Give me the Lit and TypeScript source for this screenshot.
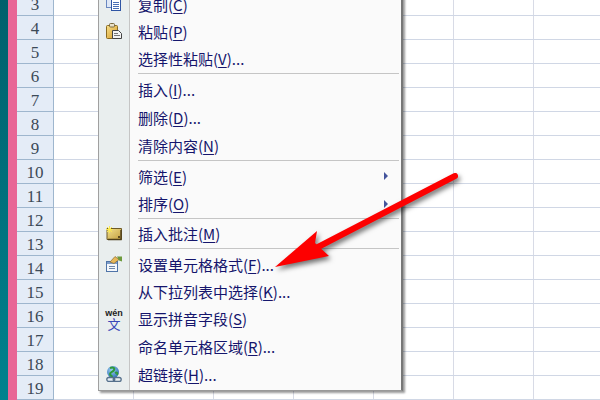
import { LitElement, html, css, svg } from "lit";
import { customElement } from "lit/decorators.js";

type Item = { label: string; key: string; tail?: string; icon?: string; sub?: boolean; h: number; sep?: boolean; up?: boolean };

const rows = [3, 4, 5, 6, 7, 8, 9, 10, 11, 12, 13, 14, 15, 16, 17, 18, 19];
const cols = [0, 1, 2, 3, 4, 5, 6];

const items: Item[] = [
  { label: "复制", key: "C", icon: "copy", h: 27 },
  { label: "粘贴", key: "P", icon: "paste", h: 27 },
  { label: "选择性粘贴", key: "V", tail: "...", h: 28, sep: true },
  { label: "插入", key: "I", tail: "...", h: 28 },
  { label: "删除", key: "D", tail: "...", h: 27 },
  { label: "清除内容", key: "N", h: 29, sep: true },
  { label: "筛选", key: "E", sub: true, h: 27 },
  { label: "排序", key: "O", sub: true, h: 28, sep: true },
  { label: "插入批注", key: "M", icon: "note", h: 27, sep: true, up: true },
  { label: "设置单元格格式", key: "F", tail: "...", icon: "format", h: 27 },
  { label: "从下拉列表中选择", key: "K", tail: "...", h: 27 },
  { label: "显示拼音字段", key: "S", icon: "wen", h: 28 },
  { label: "命名单元格区域", key: "R", tail: "...", h: 28 },
  { label: "超链接", key: "H", tail: "...", icon: "link", h: 28 },
];

const icons: Record<string, unknown> = {
  copy: svg`<rect x="0.5" y="0.5" width="9" height="11" fill="#dfe8f6" stroke="#6a88c0"/><rect x="5.5" y="3.5" width="9" height="11" fill="#fff" stroke="#2f55a4"/><path d="M7 6.500h6M7 8.500h6M7 10.500h6M7 12.500h6" stroke="#4a6fb5"/>`,
  paste: svg`<defs><linearGradient id="pg" x1="0" y1="0" x2="1" y2="1"><stop offset="0" stop-color="#f8e08a"/><stop offset="1" stop-color="#d49a28"/></linearGradient></defs><rect x="0.500" y="2.500" width="11" height="13" rx="1" fill="url(#pg)" stroke="#8a6a20"/><rect x="3.500" y="0.500" width="5" height="3.500" rx="1" fill="#e8e0c8" stroke="#7a6a40"/><path d="M6.500 7.500h6l3 3v5h-9z" fill="#f4f4f4" stroke="#444"/><path d="M8 10.500h4M8 12.500h6" stroke="#777"/>`,
  note: svg`<defs><linearGradient id="ng" x1="0" y1="0" x2="1" y2="1"><stop offset="0" stop-color="#f2e08e"/><stop offset="1" stop-color="#c4a040"/></linearGradient></defs><path d="M1 2.500h14.500v11h-14.500z" fill="url(#ng)" stroke="#6e5a28"/><path d="M15 4v9.500H2" stroke="#4e3f1a" stroke-width="1.400" fill="none"/><rect x="12" y="10" width="2" height="2" fill="#5e4c20"/><path d="M3.500 0v7M0 3.500h7M1 1l5 5M6 1L1 6" stroke="#fbe94e"/>`,
  format: svg`<rect x="0.500" y="5.500" width="11" height="10" fill="#f4f7fb" stroke="#4f74a8"/><path d="M1 7h10" stroke="#7d9cc8" stroke-width="2"/><path d="M3 10.500h6M3 12.500h6" stroke="#6e86a8"/><path d="M4 6l5-5.500 4 3-5 4z" fill="#e8b858" stroke="#8a6a30" stroke-width=".7"/><path d="M11 0.500h5v5l-3-1z" fill="#6d9a3c"/>`,
  link: svg`<defs><radialGradient id="lg" cx=".4" cy=".35" r=".7"><stop offset="0" stop-color="#9ad0f0"/><stop offset="1" stop-color="#2f6fb8"/></radialGradient></defs><circle cx="7" cy="6" r="6" fill="url(#lg)"/><path d="M4 2c3-1 5 0 4 2s-4 2-4 4 2 1 2 3M9 7c2-1 3 0 2 2" stroke="#2f9a3a" stroke-width="2" fill="none"/><rect x="0.800" y="11.500" width="8" height="4" rx="2" fill="#e4edf4" stroke="#55708c" stroke-width="1.300"/><rect x="7.200" y="11.500" width="8" height="4" rx="2" fill="none" stroke="#55708c" stroke-width="1.300"/>`,
};

@customElement("app-root")
export class AppRoot extends LitElement {
  static styles = css`
    :host { display: block; position: relative; width: 600px; height: 400px; overflow: hidden; background: #fff; font-family: "Noto Sans CJK SC", sans-serif; }
    .sheet { display: flex; height: 400px; overflow: hidden; }
    .teal { flex: none; width: 8px; background: linear-gradient(#00606c, #00828e); }
    .pink { flex: none; width: 9px; background: #e86696; }
    .grid { flex: 1; min-width: 0; display: flex; flex-direction: column; }
    .row { flex: none; height: 24px; display: flex; box-sizing: border-box; border-bottom: 1px solid #d0d7e5; }
    .row.first { height: 16px; }
    .head { flex: none; box-sizing: border-box; width: 37px; height: 24px; margin-bottom: -1px; background: #e4ecf7; border-right: 1px solid #9eb6ce; border-bottom: 1px solid #9eb6ce; display: flex; align-items: center; justify-content: center; padding-top: 3px; font: 17px "Liberation Serif", serif; color: #3c4a58; overflow: hidden; line-height: 20px; }
    .row.first .head { height: 16px; align-items: flex-end; padding-top: 0; line-height: 20px; }
    .cell { flex: none; box-sizing: border-box; width: 80px; border-right: 1px solid #d8dbe6; }
    .menu { position: absolute; left: 98px; top: -9px; width: 302px; display: flex; flex-direction: column; background: linear-gradient(90deg, #e9eeee 0 30px, #c5c5c5 30px 31px, #fafafa 31px); border-left: 1px solid #a0a0a0; border-right: 2px solid #777; border-bottom: 1px solid #999; box-shadow: 2px 2px 2px rgba(0,0,0,.4); padding-bottom: 1px; }
    .item { flex: none; box-sizing: border-box; position: relative; display: flex; align-items: center; padding-left: 39px; padding-bottom: 1px; font-size: 15px; color: #15156c; white-space: nowrap; }
    .item.up { padding-bottom: 3px; }
    .item u { text-underline-offset: 2px; }
    .sep { flex: none; height: 3px; margin: 0 2px 0 39px; box-sizing: border-box; border-top: 1px solid #c5c5c5; }
    .icon { position: absolute; left: 7px; top: 50%; margin-top: -9px; width: 16px; height: 16px; display: block; }
    .wen { position: absolute; left: 7px; top: 50%; margin-top: -10px; width: 16px; display: flex; flex-direction: column; align-items: center; line-height: 1; }
    .wen b { font: bold 9px/8px "Liberation Sans", sans-serif; color: #222; height: 8px; }
    .wen i { font: normal 13px/12px "Noto Sans CJK SC", sans-serif; color: #3a46b8; height: 12px; margin-top: 1px; }
    .tri { position: absolute; left: 285px; top: 50%; margin-top: -4.500px; width: 0; height: 0; border-left: 4px solid #44549c; border-top: 4px solid transparent; border-bottom: 4px solid transparent; }
    .arrow { position: absolute; left: 0; top: 0; width: 600px; height: 400px; filter: drop-shadow(2px 3px 2.500px rgba(0,0,0,.55)); pointer-events: none; }
  `;

  private renderIcon(i: Item) {
    if (!i.icon) return null;
    if (i.icon === "wen") return html`<span class="wen"><b>wén</b><i>文</i></span>`;
    return html`<svg class="icon" viewBox="0 0 16 16">${icons[i.icon]}</svg>`;
  }

  render() {
    return html`
      <div class="sheet">
        <div class="teal"></div>
        <div class="pink"></div>
        <div class="grid">
          ${rows.map((r, n) => html`
            <div class="row ${n === 0 ? "first" : ""}">
              <div class="head">${r}</div>
              ${cols.map(() => html`<div class="cell"></div>`)}
            </div>`)}
        </div>
      </div>
      <div class="menu">
        ${items.map((i) => html`
          <div class="item ${i.up ? "up" : ""}" style="height:${i.h}px">
            ${this.renderIcon(i)}
            <span>${i.label}(<u>${i.key}</u>)${i.tail ?? ""}</span>
            ${i.sub ? html`<span class="tri"></span>` : null}
          </div>
          ${i.sep ? html`<div class="sep"></div>` : null}`)}
      </div>
      <svg class="arrow" viewBox="0 0 600 400">
        <path d="M455 176L318 247" stroke="#fd0000" stroke-width="6" stroke-linecap="round" fill="none"/>
        <path d="M275 267L317 231L315 243L329 256z" fill="#fd0000"/>
      </svg>
    `;
  }
}
